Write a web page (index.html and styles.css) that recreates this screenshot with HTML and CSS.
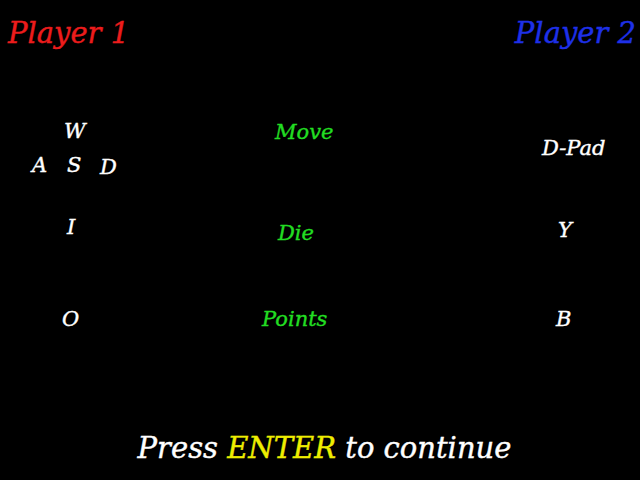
FILE: index.html
```html
<!DOCTYPE html>
<html>
<head>
<meta charset="utf-8">
<link rel="stylesheet" href="styles.css">
</head>
<body>
<div class="screen">
  <div class="header">
    <span class="p1">Player 1</span>
    <span class="p2">Player 2</span>
  </div>
  <div class="controls">
    <div class="col col1">
      <div class="wasd">
        <div class="wrow"><span class="key-w">W</span></div>
        <div class="asd">
          <span>A</span>
          <span>S</span>
          <span class="key-d">D</span>
        </div>
      </div>
      <div class="item key-i">I</div>
      <div class="item key-o">O</div>
    </div>
    <div class="col col2 green">
      <div class="item act-move">Move</div>
      <div class="item act-die">Die</div>
      <div class="item act-points">Points</div>
    </div>
    <div class="col col3">
      <div class="item pad-dpad">D-Pad</div>
      <div class="item pad-y">Y</div>
      <div class="item pad-b">B</div>
    </div>
  </div>
  <div class="footer">Press <span class="yellow">ENTER</span> to continue</div>
</div>
</body>
</html>
```

FILE: styles.css
```css
html, body {
  margin: 0;
  padding: 0;
  background: #000;
}
.screen {
  width: 640px;
  height: 480px;
  display: flex;
  flex-direction: column;
  font-family: "DejaVu Serif", serif;
  font-style: italic;
  color: #fff;
  overflow: hidden;
  -webkit-text-stroke: 0.4px currentColor;
}
.header {
  display: flex;
  justify-content: space-between;
  padding: 16px 4px 0 8px;
  font-size: 29px;
  line-height: 34px;
  height: 34px;
}
.p1 { color: #ec1c1c; }
.p2 { color: #1e30e8; }
.controls {
  display: grid;
  grid-template-columns: 200px 300px 140px;
  font-size: 21px;
  line-height: 26px;
}
.col {
  display: flex;
  flex-direction: column;
  align-items: flex-start;
}
.green { color: #22dd22; }
.yellow { color: #eeee00; }

/* Player 1 keys */
.wasd { margin-top: 68px; }
.wrow { padding-left: 64px; }
.asd {
  display: grid;
  grid-template-columns: 35px 33px auto;
  align-items: start;
  padding-left: 32px;
  margin-top: 8px;
}
.key-d { padding-top: 2px; }
.key-i { margin: 34px 0 0 67px; }
.key-o { margin: 66px 0 0 62px; }

/* Actions */
.act-move { margin: 69px 0 0 75px; }
.act-die { margin: 75px 0 0 78px; }
.act-points { margin: 60px 0 0 62px; }

/* Player 2 pad */
.pad-dpad { margin: 85px 0 0 42px; }
.pad-y { margin: 56px 0 0 58px; }
.pad-b { margin: 63px 0 0 56px; }

.footer {
  margin-top: auto;
  margin-bottom: 15px;
  padding-left: 9px;
  text-align: center;
  font-size: 29px;
  line-height: 34px;
}
```
